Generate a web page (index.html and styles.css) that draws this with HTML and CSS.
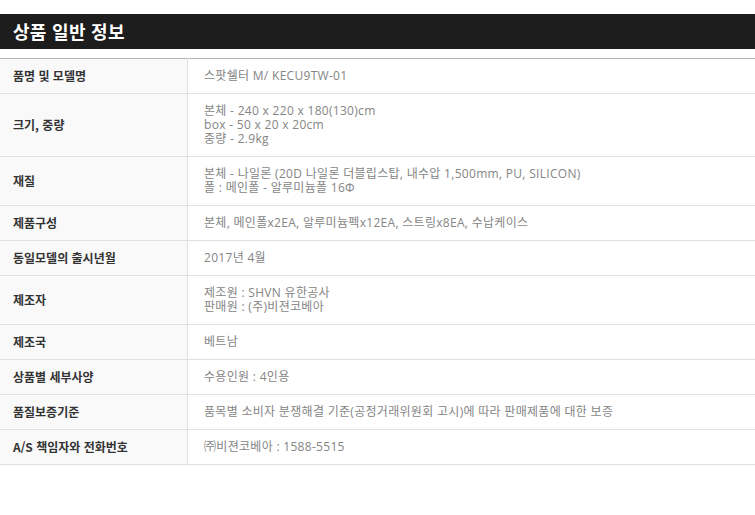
FILE: index.html
```html
<!DOCTYPE html>
<html lang="ko">
<head>
<meta charset="utf-8">
<title>상품 일반 정보</title>
<link rel="stylesheet" href="styles.css">
</head>
<body>
<div class="page">
  <h2 class="title-bar">상품 일반 정보</h2>
  <table class="info">
    <tbody>
      <tr><th>품명 및 모델명</th><td>스팟쉘터 M/ KECU9TW-01</td></tr>
      <tr><th>크기, 중량</th><td>본체 - 240 x 220 x 180(130)cm<br>box - 50 x 20 x 20cm<br>중량 - 2.9kg</td></tr>
      <tr><th>재질</th><td>본체 - 나일론 (20D 나일론 더블립스탑, 내수압 1,500mm, PU, SILICON)<br>폴 : 메인폴 - 알루미늄폴 16Φ</td></tr>
      <tr><th>제품구성</th><td>본체, 메인폴x2EA, 알루미늄펙x12EA, 스트링x8EA, 수납케이스</td></tr>
      <tr><th>동일모델의 출시년월</th><td>2017년 4월</td></tr>
      <tr><th>제조자</th><td>제조원 : SHVN 유한공사<br>판매원 : (주)비젼코베아</td></tr>
      <tr><th>제조국</th><td>베트남</td></tr>
      <tr><th>상품별 세부사양</th><td>수용인원 : 4인용</td></tr>
      <tr><th>품질보증기준</th><td>품목별 소비자 분쟁해결 기준(공정거래위원회 고시)에 따라 판매제품에 대한 보증</td></tr>
      <tr><th>A/S 책임자와 전화번호</th><td>㈜비젼코베아 : 1588-5515</td></tr>
    </tbody>
  </table>
</div>
</body>
</html>
```
FILE: styles.css
```css
html, body {
  margin: 0;
  padding: 0;
  background: #ffffff;
}
body {
  font-family: "Noto Sans CJK KR", "Noto Sans", sans-serif;
  font-size: 12px;
}
.page {
  padding-top: 14px;
}
.title-bar {
  margin: 0;
  height: 35px;
  line-height: 35px;
  padding-left: 13px;
  background: #1d1d1d;
  color: #ffffff;
  font-size: 18px;
  font-weight: 700;
  letter-spacing: 0.3px;
}
.info {
  margin-top: 9px;
  width: 100%;
  border-collapse: collapse;
  border-top: 1px solid #b4b4b4;
}
.info th,
.info td {
  padding: 10px 0;
  line-height: 14px;
  border-bottom: 1px solid #e0e0e0;
  text-align: left;
  vertical-align: middle;
}
.info th {
  width: 174px;
  padding-left: 13px;
  background: #f9f9f9;
  border-right: 1px solid #e0e0e0;
  color: #333333;
  font-weight: 700;
}
.info td {
  padding-left: 16px;
  font-family: "Open Sans", "Noto Sans CJK KR", sans-serif;
  color: #858585;
  font-weight: 400;
  letter-spacing: 0.3px;
}
```
